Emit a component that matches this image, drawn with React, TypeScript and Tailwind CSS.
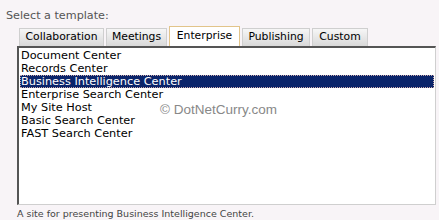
import React from "react";

const tabs: [string, string][] = [
  ["Collaboration", "w-[85px]"],
  ["Meetings", "w-[61px]"],
  ["Enterprise", "w-[71px]"],
  ["Publishing", "w-[68px]"],
  ["Custom", "w-[56px]"],
];
const items = [
  "Document Center",
  "Records Center",
  "Business Intelligence Center",
  "Enterprise Search Center",
  "My Site Host",
  "Basic Search Center",
  "FAST Search Center",
];

export default function App() {
  return (
    <div className="w-[439px] h-[220px] bg-[#f8f4f7] font-['DejaVu_Sans',sans-serif] text-[#444] overflow-hidden">
      <div className="pl-[6px] pt-[9px] text-[11.2px] leading-[13px] text-[#555]">Select a template:</div>
      <div className="ml-[17px] mr-[3px] mt-[5px]">
        <div className="flex items-end gap-[2px] pl-[2px] h-[19px]">
          {tabs.map(([t, w]) =>
            t === "Enterprise" ? (
              <div
                key={t}
                className={`${w} h-[20px] flex items-center justify-center bg-white border border-b-0 border-[#e2c48a] text-[10.8px] text-black`}
              >
                {t}
              </div>
            ) : (
              <div
                key={t}
                className={`${w} h-[18px] flex items-center justify-center bg-gradient-to-b from-[#f6f6f6] to-[#d9d9d9] border border-b-0 border-[#cfcfcf] text-[10.8px] text-black`}
              >
                {t}
              </div>
            )
          )}
        </div>
        <div className="h-[159px] bg-white border-t-2 border-l-2 border-t-[#555] border-l-[#555] border-r border-b border-r-[#cfcfcf] border-b-[#cfcfcf] relative">
          <div className="pt-[1px] px-[1px]">
            {items.map((it) =>
              it === "Business Intelligence Center" ? (
                <div
                  key={it}
                  className="h-[13px] leading-[13px] pl-[1px] bg-[#0a246a] text-white text-[11.3px] outline outline-1 outline-dotted outline-[#caa] -outline-offset-1"
                >
                  {it}
                </div>
              ) : (
                <div key={it} className="h-[13px] leading-[13px] pl-[1px] text-black text-[11.3px]">
                  {it}
                </div>
              )
            )}
          </div>
          <div className="absolute left-[141px] top-[52px] text-[13.5px] text-[#888] font-['Liberation_Sans',sans-serif]">
            © DotNetCurry.com
          </div>
        </div>
      </div>
      <div className="pl-[17px] pt-[3px] text-[9.5px] leading-[11px] text-[#444]">
        A site for presenting Business Intelligence Center.
      </div>
    </div>
  );
}
